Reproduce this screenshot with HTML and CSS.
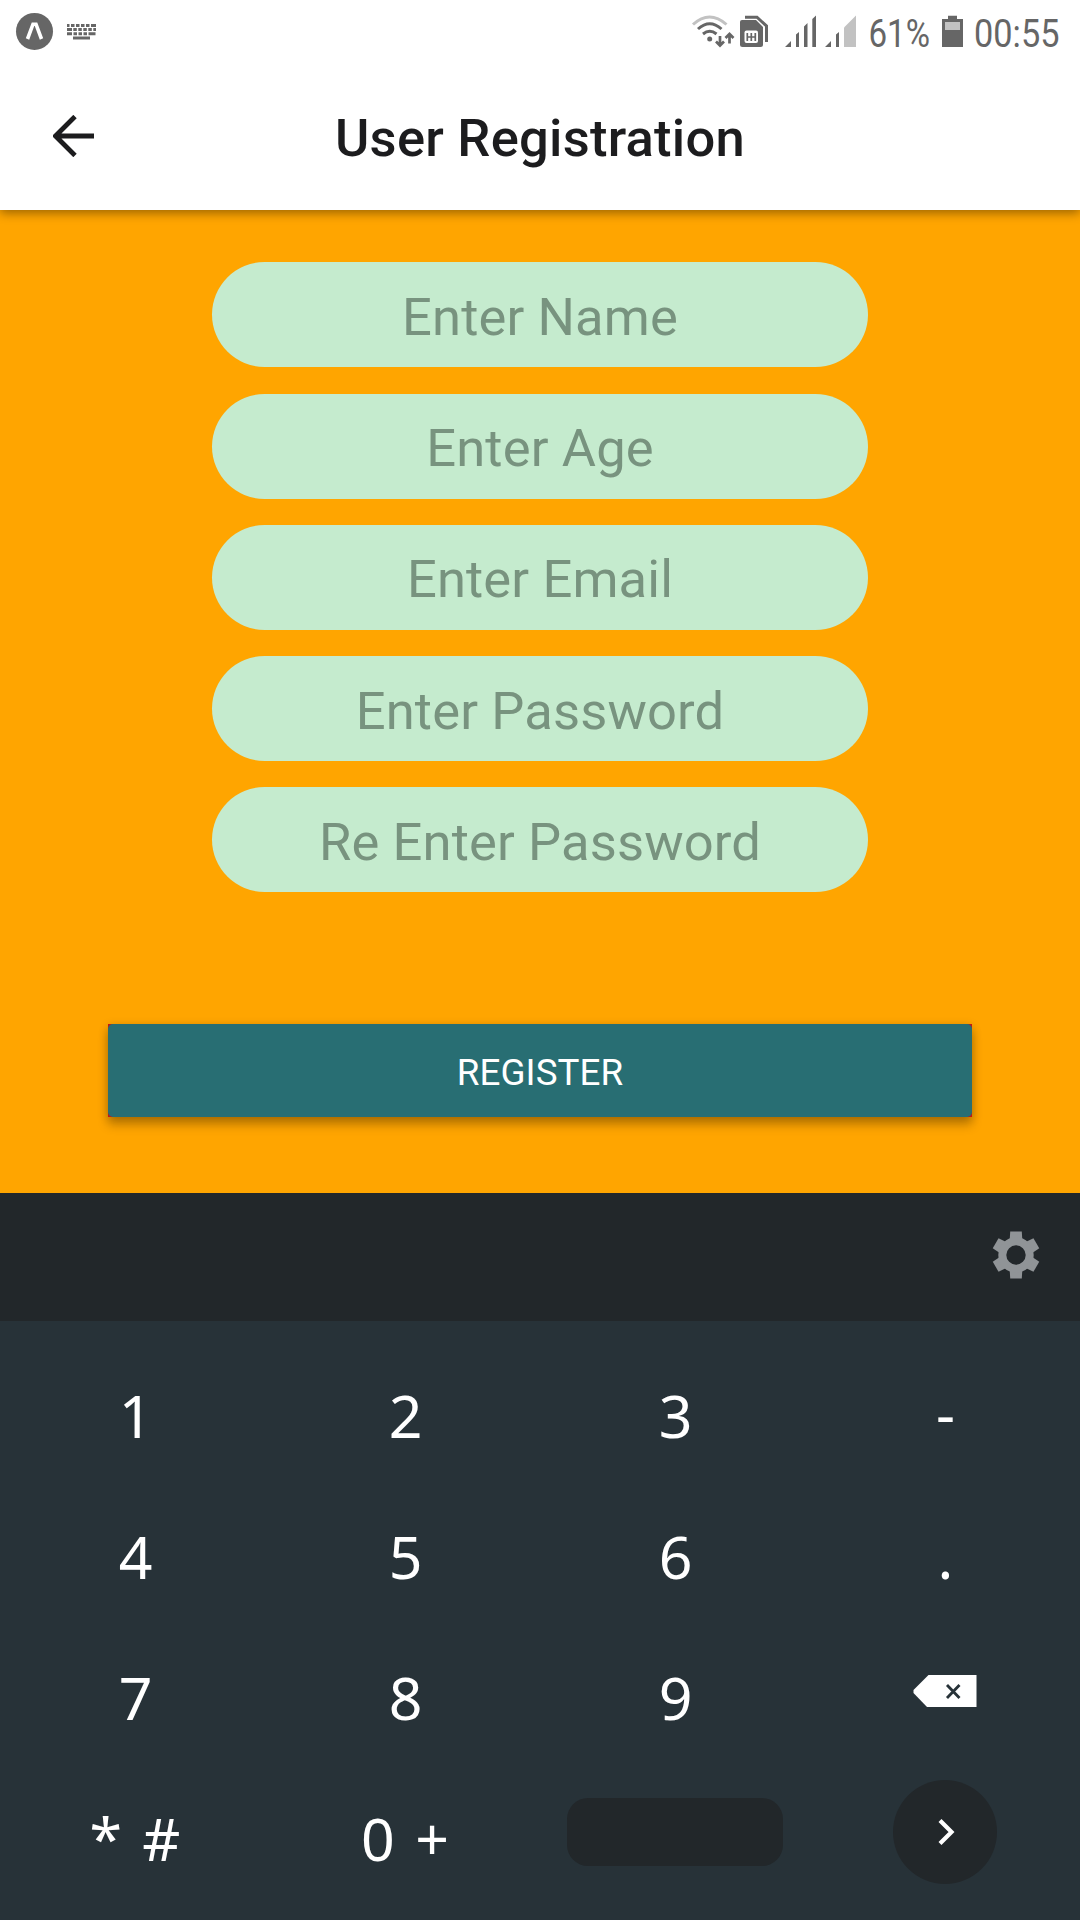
FILE: index.html
```html
<!DOCTYPE html>
<html lang="en">
<head>
<meta charset="utf-8">
<title>User Registration</title>
<link rel="stylesheet" href="styles.css">
</head>
<body>
<div class="screen">
  <header class="top">
    <div class="status">
      <svg class="notifications" width="120" height="63" viewBox="0 0 120 63">
        <circle cx="34.5" cy="31.4" r="18.5" fill="#666"/>
        <path d="M27.5 39 L33 24.2 H36 L41.5 39" fill="none" stroke="#fff" stroke-width="3.6"/>
        <g fill="none" stroke="#666" stroke-width="3">
          <path d="M67 25.5H96" stroke-dasharray="2.5 1.5 3.5 1.5 3.5 1.5 3.5 1.5 3.5 1.5 5"/>
          <path d="M67 29.5H96" stroke-dasharray="5 1.3 3.5 1.5 3.5 1.5 3.5 1.5 3.5 1.5 4"/>
          <path d="M67 33.7H96" stroke-dasharray="5 1.5 3.5 1.5 3.5 1.5 3.5 1.5 7"/>
          <path d="M73 38H90"/>
        </g>
      </svg>
      <svg class="signals" width="180" height="63" viewBox="690 0 180 63">
        <g fill="none" stroke="#666" stroke-width="3">
          <path d="M693 24.5Q709.5 9.5 726.5 24.5" stroke="#c2c2c2"/>
          <path d="M698 29Q709.7 18.5 721.5 29"/>
          <path d="M703 34Q709.7 28.5 716.5 34"/>
          <path d="M720 36V45M716 41.5L720 45.5L724 41.5M729.5 43.5V34M725.5 38L729.5 34L733.5 38" stroke-width="2.7"/>
          <path d="M745 17.2H757L766.500 26V42"/>
        </g>
        <circle cx="709.7" cy="39" r="2.5" fill="#666"/>
        <path d="M742 20H756L763 27V44.5Q763 47 760.5 47H742.5Q740 47 740 44.5V22Q740 20 742 20Z" fill="#666"/>
        <rect x="744.5" y="30.5" width="13.5" height="12.5" rx="2" fill="#fff"/>
        <path d="M747.300 33V41M751.300 33V41M755.300 33V41M747.300 37H755.300" stroke="#666" stroke-width="1.700"/>
        <path d="M785 47L791 41V47ZM796 47V34.5L799 32V47ZM804 47V26.5L807.5 23V47ZM812.3 47V19L816 15.5V47ZM825 47L831 41V47ZM836 47V34.5L839 32V47Z" fill="#666"/>
        <path d="M844 47V27.5L856 15.5V47Z" fill="#c2c2c2"/>
      </svg>
      <svg class="readout" width="210" height="63" viewBox="870 0 210 63">
        <text class="status-text" x="868.5" y="46.5" textLength="61.5" lengthAdjust="spacingAndGlyphs">61%</text>
        <path d="M948 15.7H957V19H963V47H942V19H948Z" fill="#666"/>
        <rect x="945" y="22" width="15" height="8" fill="#c2c2c2"/>
        <text class="status-text" x="974" y="46.5" textLength="85.5" lengthAdjust="spacingAndGlyphs">00:55</text>
      </svg>
    </div>
    <div class="bar">
      <svg class="back" width="42" height="42" viewBox="0 0 42 42"><path d="M41 21H4M22 1.5L2.5 21L22 40.5" fill="none" stroke="#1c1c1e" stroke-width="4.8"/></svg>
      <h1 class="title">User Registration</h1>
    </div>
  </header>
  <main class="form">
    <input class="field" type="text" placeholder="Enter Name">
    <input class="field" type="text" placeholder="Enter Age">
    <input class="field" type="text" placeholder="Enter Email">
    <input class="field" type="text" placeholder="Enter Password">
    <input class="field" type="text" placeholder="Re Enter Password">
    <div class="register-wrap"><button class="register">REGISTER</button></div>
  </main>
  <section class="keyboard">
    <div class="tools">
      <svg width="48" height="48" viewBox="-24 -24 48 48">
        <g fill="#909497">
          <path id="tooth" d="M-6.5 -12L-5.8 -23.5H5.8L6.5 -12Z"/>
          <use href="#tooth" transform="rotate(60)"/><use href="#tooth" transform="rotate(120)"/><use href="#tooth" transform="rotate(180)"/><use href="#tooth" transform="rotate(240)"/><use href="#tooth" transform="rotate(300)"/>
        </g>
        <circle r="13.7" fill="none" stroke="#909497" stroke-width="8"/>
      </svg>
    </div>
    <div class="keys">
      <div class="key">1</div><div class="key">2</div><div class="key">3</div><div class="key dash">-</div>
      <div class="key">4</div><div class="key">5</div><div class="key">6</div><div class="key">.</div>
      <div class="key">7</div><div class="key">8</div><div class="key">9</div>
      <div class="key icon">
        <svg class="delete" width="64" height="32" viewBox="0 0 64 32"><path d="M15.5 0H63.5V32H14L0.500 18V15Z" fill="#fff"/><path d="M34 10L46.5 23M46.5 10L34 23" stroke="#273238" stroke-width="2.8"/></svg>
      </div>
      <div class="key pair">* #</div><div class="key pair">0 +</div>
      <div class="key icon"><div class="space"></div></div>
      <div class="key icon"><div class="next">
        <svg width="20" height="30" viewBox="0 0 20 30"><path d="M3 3.5L14.5 15L3 26.5" fill="none" stroke="#fff" stroke-width="4.2"/></svg>
      </div></div>
    </div>
  </section>
</div>
</body>
</html>
```
FILE: styles.css
```css
* { box-sizing: border-box; }
body { margin: 0; font-family: Roboto, sans-serif; }
.screen { width: 1080px; height: 1920px; display: flex; flex-direction: column; overflow: hidden; background: #ffa500; }
.top { height: 210px; flex: none; background: #fff; box-shadow: 0 3px 10px rgba(0,0,0,.4); }
.status { height: 63px; display: flex; }
.notifications { margin-right: auto; }
.status-text { font: 38.5px Roboto, sans-serif; fill: #666; }
.bar { height: 147px; display: grid; grid-template-columns: 120px 1fr 120px; align-items: center; }
.back { margin: 0 0 1px 53px; }
.title { margin: 3px 0 0; text-align: center; font-size: 52.5px; line-height: 62px; font-weight: 500; letter-spacing: .25px; color: #1c1c1e; }
.form { height: 983px; flex: none; padding-top: 52.25px; display: flex; flex-direction: column; align-items: center; gap: 26.25px; }
.field { width: 656px; height: 105px; flex: none; border: 0; border-radius: 52.5px; padding: 4px 0 0; background: #c5ebce; font: 52.5px Roboto, sans-serif; letter-spacing: .14px; text-align: center; }
.field::placeholder { color: #78937f; opacity: 1; }
.register-wrap { width: 864px; height: 93px; margin-top: 105px; background: #c01818; box-shadow: 0 8px 10px rgba(0,0,0,.23), 0 2px 9px rgba(0,0,0,.18); }
.register { display: block; width: 100%; height: 93px; border: 0; border-radius: 5px; padding: 5px 0 0; background: #286e73; color: #fff; font: 36.75px Roboto, sans-serif; letter-spacing: .1px; }
.keyboard { flex: 1; background: #273238; }
.tools { height: 128px; background: #22272a; display: flex; align-items: center; justify-content: flex-end; padding: 0 40px 5px 0; }
.keys { padding-top: 18px; display: grid; grid-template-columns: repeat(4, 1fr); grid-auto-rows: 141px; }
.key { display: flex; align-items: center; justify-content: center; padding: 11px 0 0 1px; color: #fff; font: 59px "Noto Sans", sans-serif; white-space: pre; }
.dash { padding-top: 5px; }
.pair { padding-left: 0; word-spacing: 5px; }
.key.icon { padding: 0 0 1px; }
.delete { margin-right: 1px; }
.space { width: 216px; height: 68px; border-radius: 21px; background: #22272a; }
.next { width: 104px; height: 104px; border-radius: 50%; background: #22272a; display: flex; align-items: center; justify-content: center; padding-left: 4px; }
```
